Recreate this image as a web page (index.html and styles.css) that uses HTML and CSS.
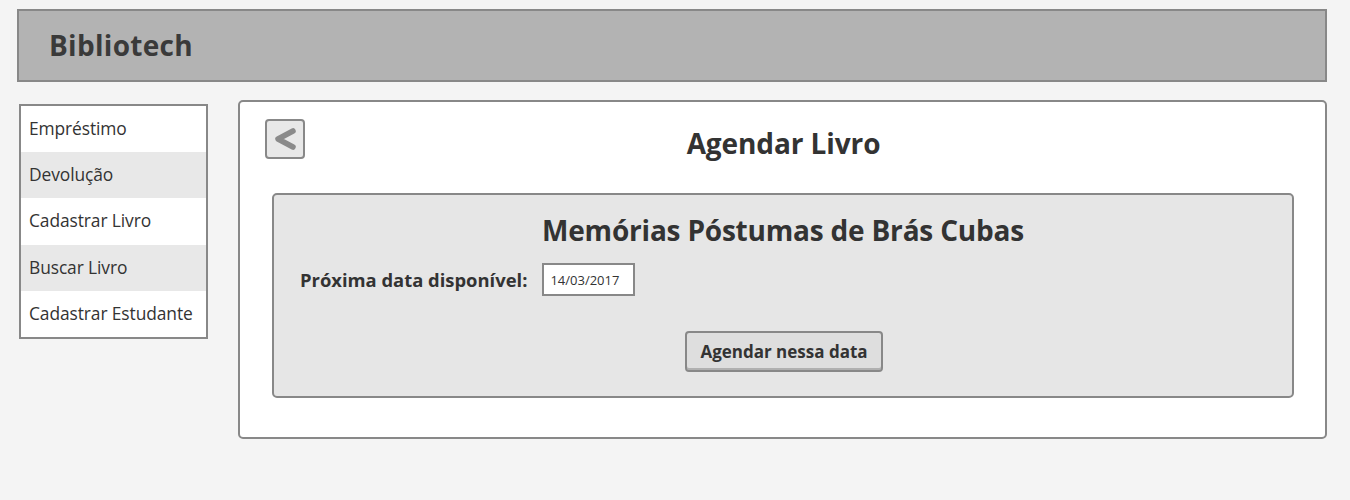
FILE: index.html
```html
<!DOCTYPE html>
<html lang="pt">
<head>
<meta charset="utf-8">
<title>Bibliotech</title>
<link rel="stylesheet" href="styles.css">
</head>
<body>
<header class="topbar"><h1 class="brand">Bibliotech</h1></header>
<div class="layout">
  <nav class="sidebar">
    <a class="nav-item">Empréstimo</a>
    <a class="nav-item alt">Devolução</a>
    <a class="nav-item">Cadastrar Livro</a>
    <a class="nav-item alt">Buscar Livro</a>
    <a class="nav-item">Cadastrar Estudante</a>
  </nav>
  <main class="panel">
    <div class="panel-head">
      <button class="back" aria-label="Voltar">
        <svg width="26" height="26" viewBox="0 0 26 26"><path d="M21 5 L6 13 L21 21" fill="none" stroke="#8a8a8a" stroke-width="5.5" stroke-linecap="round" stroke-linejoin="round"/></svg>
      </button>
      <h2 class="page-title">Agendar Livro</h2>
    </div>
    <section class="card">
      <h3 class="book-title">Memórias Póstumas de Brás Cubas</h3>
      <div class="date-row">
        <span class="date-label">Próxima data disponível:</span>
        <span class="date-box">14/03/2017</span>
      </div>
      <div class="actions"><button class="btn">Agendar nessa data</button></div>
    </section>
  </main>
</div>
</body>
</html>
```
FILE: styles.css
```css
* { box-sizing: border-box; }
body {
  margin: 0;
  padding: 9px 23px 0 17px;
  background: #f4f4f4;
  color: #333;
  font-family: "Open Sans", "Noto Sans", sans-serif;
}
.topbar {
  height: 73px;
  background: #b3b3b3;
  border: 2px solid #888;
  display: flex;
  align-items: center;
  padding-left: 30px;
  padding-bottom: 2px;
}
.brand {
  margin: 0;
  font-size: 28px;
  font-weight: 700;
  color: #3a3a3a;
  letter-spacing: 0.3px;
}
.layout {
  display: flex;
  align-items: flex-start;
  gap: 30px;
  margin-top: 18px;
}
.sidebar {
  width: 189px;
  margin-top: 4px;
  margin-left: 2px;
  border: 2px solid #888;
  background: #fff;
  display: flex;
  flex-direction: column;
}
.nav-item {
  height: 46.2px;
  display: flex;
  align-items: center;
  padding-left: 8px;
  padding-bottom: 2px;
  font-size: 17.4px;
  color: #333;
  letter-spacing: -0.1px;
}
.nav-item.alt { background: #e8e8e8; }
.panel {
  flex: 1;
  height: 339px;
  background: #fff;
  border: 2px solid #888;
  border-radius: 5px;
  padding: 17px 31px 0 25px;
}
.panel-head {
  position: relative;
  height: 74px;
  display: flex;
  justify-content: center;
  padding-left: 8px;
}
.back {
  position: absolute;
  left: 0;
  top: 0;
  width: 40px;
  height: 40px;
  padding: 0;
  background: #e8e8e8;
  border: 2px solid #888;
  border-radius: 4px;
  display: flex;
  align-items: center;
  justify-content: center;
}
.page-title {
  margin: 5px 0 0 0;
  font-size: 28px;
  font-weight: 700;
  color: #333;
  letter-spacing: -0.1px;
}
.card {
  margin-left: 7px;
  height: 205px;
  background: #e6e6e6;
  border: 2px solid #888;
  border-radius: 5px;
  padding: 15px 26px 0 26px;
}
.book-title {
  margin: 0;
  text-align: center;
  font-size: 28px;
  font-weight: 700;
  color: #333;
  letter-spacing: -0.2px;
  line-height: 40px;
}
.date-row {
  display: flex;
  align-items: center;
  gap: 15px;
  margin-top: 13px;
}
.date-label {
  font-size: 18.4px;
  font-weight: 700;
}
.date-box {
  width: 93px;
  height: 33px;
  background: #fff;
  border: 2px solid #888;
  font-size: 13px;
  display: flex;
  align-items: center;
  padding-left: 6px;
}
.actions {
  display: flex;
  justify-content: center;
  margin-top: 35px;
  padding-left: 2px;
}
.btn {
  width: 198px;
  height: 41px;
  background: #dedede;
  border: 2px solid #888;
  border-radius: 4px;
  box-shadow: inset 0 -2px 0 #b0b0b0;
  font-family: inherit;
  font-size: 17px;
  font-weight: 700;
  color: #333;
}
```
